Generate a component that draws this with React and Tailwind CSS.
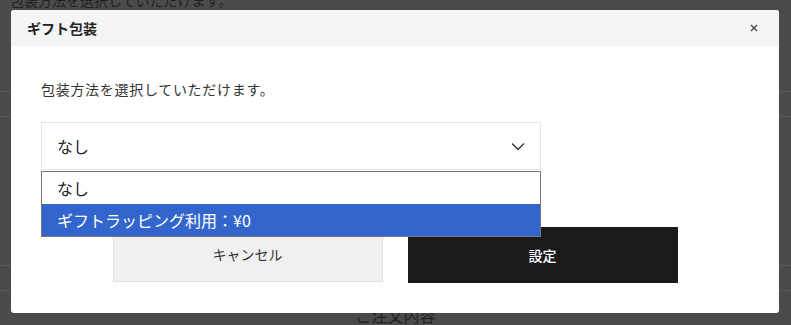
import React from 'react';

const font = { fontFamily: '"Noto Sans CJK JP", "Noto Sans", sans-serif' };

const GiftModal = () => {
  return (
    <div className="absolute left-[11px] top-[10px] w-[768px] h-[303px] bg-white rounded-[3px] overflow-visible">
      {/* header */}
      <div className="h-[36px] bg-[#f5f5f5] rounded-t-[3px] flex items-center justify-between pl-[16px] pr-[21px]">
        <h2 className="text-[14px] font-bold text-[#222]">ギフト包装</h2>
        <svg width="8" height="8" viewBox="0 0 8 8" className="text-[#444]">
          <path d="M1 1 L7 7 M7 1 L1 7" stroke="currentColor" strokeWidth="1.4" fill="none" />
        </svg>
      </div>

      <div className="relative px-[30px] pt-[33px]">
        <p className="text-[14px] leading-[20px] tracking-[0.05em] text-[#333]">包装方法を選択していただけます。</p>

        {/* select */}
        <div className="mt-[23px] w-[500px] h-[48px] border border-[#e5e5e5] flex items-center justify-between pl-[15px] pr-[15px]">
          <span className="text-[16px] text-[#222]">なし</span>
          <svg width="14" height="9" viewBox="0 0 14 9" className="text-[#333]">
            <path d="M1 1.5 L7 7.5 L13 1.5" stroke="currentColor" strokeWidth="1.4" fill="none" />
          </svg>
        </div>

        {/* buttons */}
        <div className="mt-[57px] flex justify-center gap-[25px]">
          <button className="w-[270px] h-[55px] bg-[#f0f0f0] border border-[#e2e2e2] text-[14px] text-[#333]">
            キャンセル
          </button>
          <button className="w-[270px] h-[56px] bg-[#1a1a1a] text-[14px] font-medium text-white">
            設定
          </button>
        </div>

        {/* open dropdown list */}
        <div className="absolute left-[30px] top-[125px] w-[500px] border border-[#767676] bg-white">
          <div className="h-[32px] flex items-center pl-[15px] text-[16px] text-[#222]">なし</div>
          <div className="h-[32px] flex items-center pl-[15px] text-[16px] text-white bg-[#3366cc]">
            ギフトラッピング利用：¥0
          </div>
        </div>
      </div>
    </div>
  );
};

export default function App() {
  return (
    <div className="relative w-full h-[325px] overflow-hidden bg-[#4b4b4b]" style={font}>
      {/* dimmed page behind the modal */}
      <div className="flex flex-col">
        <p className="-mt-[10px] pl-[10px] text-[14px] leading-[20px] text-[#1f1f1f]">
          包装方法を選択していただけます。
        </p>
        <div className="mt-[81px] border-t border-[#5a5a5a]" />
        <div className="mt-[24px] border-t border-[#5a5a5a]" />
        <div className="mt-[148px] border-t border-[#5a5a5a]" />
        <div className="mt-[24px] border-t border-[#5a5a5a]" />
        <p className="mt-[14px] text-center text-[16px] leading-[20px] text-[#1f1f1f]">ご注文内容</p>
      </div>

      <GiftModal />
    </div>
  );
}
